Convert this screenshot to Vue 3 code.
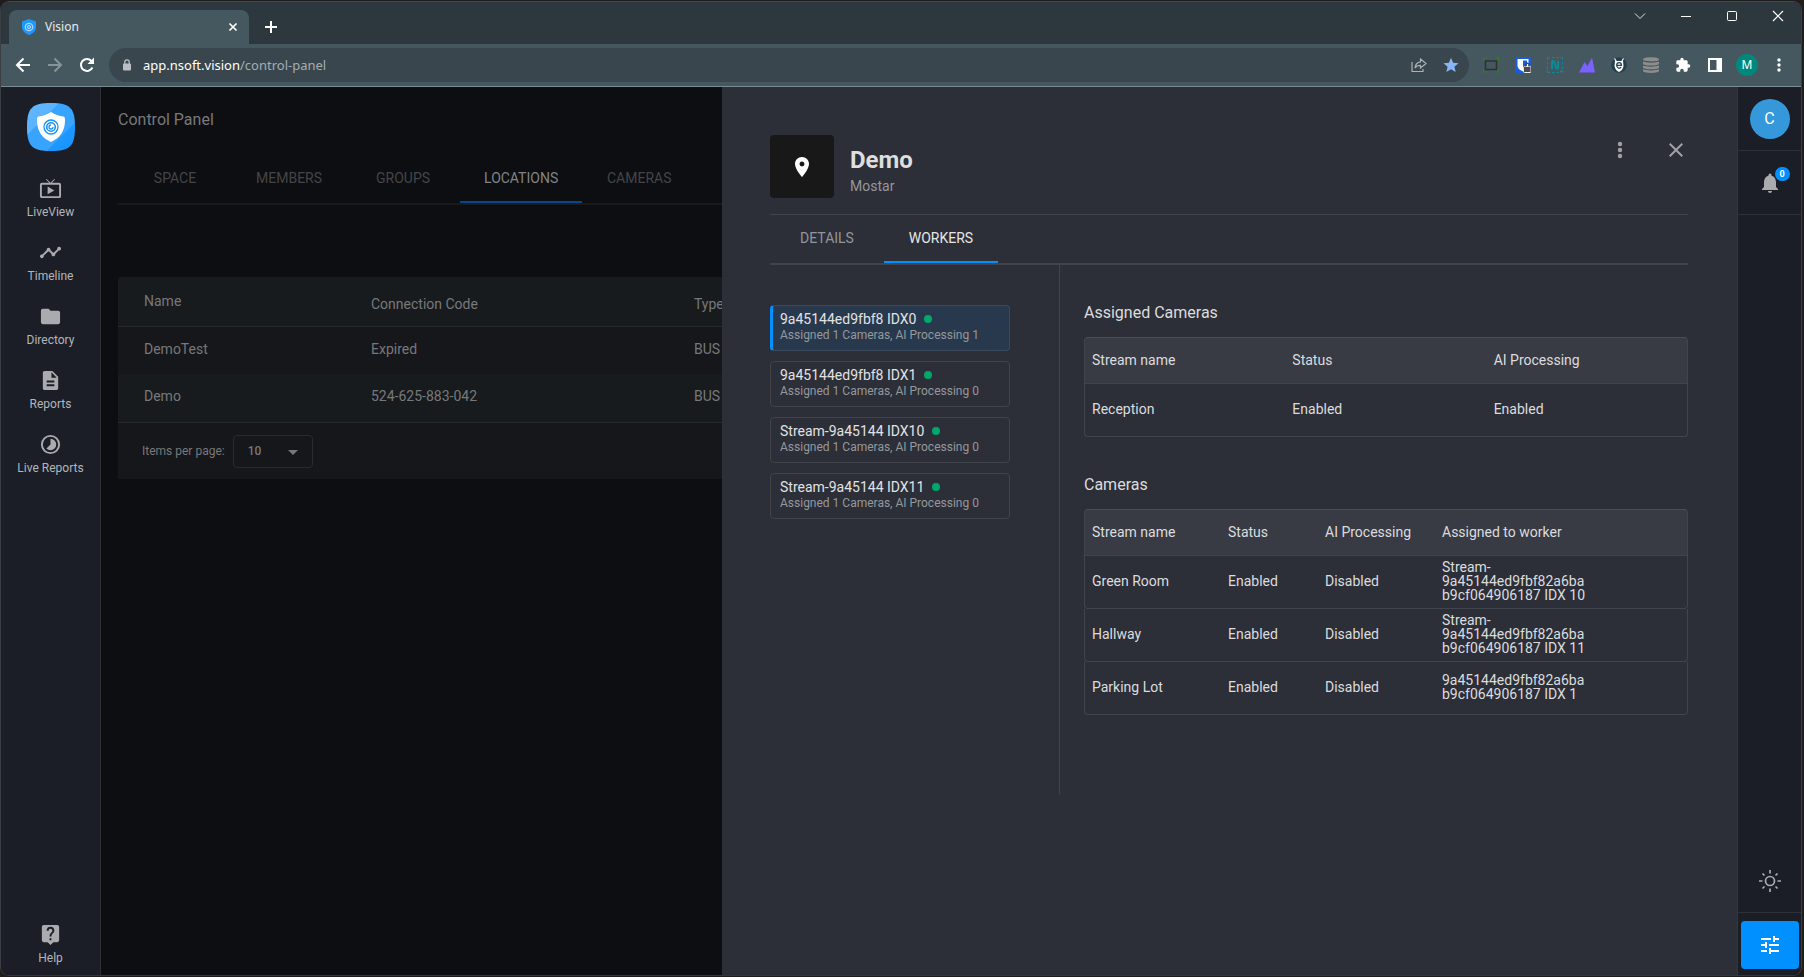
<script setup>
import { ref } from 'vue'

const navItems = [
  { label: 'LiveView', icon: 'M21 6h-7.6l3.3-3.3-.7-.7-4 4-4-4-.7.7L10.6 6H3a2 2 0 0 0-2 2v12c0 1.100.9 2 2 2h18a2 2 0 0 0 2-2V8a2 2 0 0 0-2-2zm0 14H3V8h18v12zM9 10v8l7-4z' },
  { label: 'Timeline', icon: 'M23 8c0 1.100-.9 2-2 2-.18 0-.35-.02-.51-.07l-3.560 3.550c.05.16.07.34.07.52 0 1.100-.9 2-2 2s-2-.9-2-2c0-.18.02-.36.07-.52l-2.550-2.550c-.16.05-.34.07-.52.07s-.36-.02-.52-.07l-4.550 4.560c.05.16.07.33.07.51 0 1.100-.9 2-2 2s-2-.9-2-2 .9-2 2-2c.18 0 .35.02.51.07l4.560-4.550C8.020 9.360 8 9.180 8 9c0-1.100.9-2 2-2s2 .9 2 2c0 .18-.02.36-.07.52l2.550 2.550c.16-.05.34-.07.52-.07s.36.02.52.07l3.550-3.560C19.020 8.350 19 8.180 19 8c0-1.100.9-2 2-2s2 .9 2 2z' },
  { label: 'Directory', icon: 'M10 4H4c-1.100 0-2 .9-2 2v12c0 1.100.9 2 2 2h16c1.100 0 2-.9 2-2V8c0-1.100-.9-2-2-2h-8z' },
  { label: 'Reports', icon: 'M14 2H6c-1.100 0-2 .9-2 2v16c0 1.100.9 2 2 2h12c1.100 0 2-.9 2-2V8zm2 16H8v-2h8zm0-4H8v-2h8zm-3-5V3.500L18.500 9z' },
  { label: 'Live Reports', icon: 'M16.240 7.760A5.970 5.970 0 0 0 12 6v6l-4.240 4.240a6 6 0 0 0 8.480 0 6 6 0 0 0 0-8.480zM12 2a10 10 0 1 0 0 20 10 10 0 0 0 0-20zm0 18a8 8 0 1 1 0-16 8 8 0 0 1 0 16z' }
]

const sectionTabs = ['SPACE', 'MEMBERS', 'GROUPS', 'LOCATIONS', 'CAMERAS']
const locations = [
  { name: 'DemoTest', code: 'Expired', type: 'BUS' },
  { name: 'Demo', code: '524-625-883-042', type: 'BUS' }
]
const workers = [
  { name: '9a45144ed9fbf8 IDX0', note: 'Assigned 1 Cameras, AI Processing 1' },
  { name: '9a45144ed9fbf8 IDX1', note: 'Assigned 1 Cameras, AI Processing 0' },
  { name: 'Stream-9a45144 IDX10', note: 'Assigned 1 Cameras, AI Processing 0' },
  { name: 'Stream-9a45144 IDX11', note: 'Assigned 1 Cameras, AI Processing 0' }
]
const cameras = [
  { name: 'Green Room', worker: 'Stream-9a45144ed9fbf82a6bab9cf064906187 IDX 10' },
  { name: 'Hallway', worker: 'Stream-9a45144ed9fbf82a6bab9cf064906187 IDX 11' },
  { name: 'Parking Lot', worker: '9a45144ed9fbf82a6bab9cf064906187 IDX 1' }
]

const section = ref('LOCATIONS')
const drawerTab = ref('WORKERS')
const worker = ref(0)
const address = ref('app.nsoft.vision/control-panel')
</script>

<template>
  <div class="desktop">
    <div class="window">
      <header class="titlebar">
        <div class="tab">
          <svg class="favicon" viewBox="0 0 16 16"><path fill="#1e98ff" d="M8 0l7 2.500V8c0 4-3.500 6.800-7 8-3.500-1.200-7-4-7-8V2.500z" /><circle cx="8" cy="8" r="3.700" fill="none" stroke="#a5d6ff" stroke-width="1.300" /><circle cx="8" cy="8" r="1.500" fill="none" stroke="#c8e6ff" /></svg>
          <span class="tab-title">Vision</span>
          <button class="plain" aria-label="Close tab"><svg width="10" height="10" viewBox="0 0 10 10"><path d="M1.500 1.500l7 7m0-7l-7 7" stroke="#fff" stroke-width="1.700" /></svg></button>
        </div>
        <button class="plain new-tab" aria-label="New tab"><svg width="14" height="14" viewBox="0 0 14 14"><path d="M7 1v12M1 7h12" stroke="#fff" stroke-width="2" /></svg></button>
        <div class="window-buttons">
          <button class="plain" aria-label="Search tabs"><svg width="12" height="12" viewBox="0 0 12 12" fill="none" stroke="#dfe3e5"><path d="M1 3.500l5 5 5-5" /></svg></button>
          <button class="plain" aria-label="Minimize"><svg width="12" height="12" viewBox="0 0 12 12"><path d="M1 6.500h10" stroke="#fff" /></svg></button>
          <button class="plain" aria-label="Maximize"><svg width="12" height="12" viewBox="0 0 12 12"><rect x="1.500" y="1.500" width="9" height="9" rx="1" fill="none" stroke="#fff" /></svg></button>
          <button class="plain" aria-label="Close"><svg width="12" height="12" viewBox="0 0 12 12"><path d="M1 1l10 10m0-10L1 11" stroke="#fff" stroke-width="1.200" /></svg></button>
        </div>
      </header>

      <div class="toolbar">
        <button class="plain nav-button" aria-label="Back"><svg width="16" height="16" viewBox="0 0 16 16" fill="none" stroke="#fff" stroke-width="2"><path d="M15 8H2m6.500-6.500L2 8l6.500 6.500" /></svg></button>
        <button class="plain nav-button" aria-label="Forward"><svg width="16" height="16" viewBox="0 0 16 16" fill="none" stroke="#87949a" stroke-width="2"><path d="M1 8h13M7.500 1.500L14 8l-6.500 6.500" /></svg></button>
        <button class="plain nav-button" aria-label="Reload"><svg width="16" height="16" viewBox="0 0 16 16"><path d="M13.400 10.500A6 6 0 1 1 12.500 4" fill="none" stroke="#fff" stroke-width="2" /><path d="M15 .5V7H8.500z" fill="#fff" /></svg></button>
        <div class="address">
          <svg width="10" height="12" viewBox="0 0 10 12"><rect x="1" y="4.500" width="8" height="7" rx="1" fill="#b9bfc2" /><path d="M2.800 5V3a2.200 2.200 0 0 1 4.400 0v2" fill="none" stroke="#b9bfc2" stroke-width="1.300" /></svg>
          <a class="url" :href="'https://' + address"><b>app.nsoft.vision</b>/control-panel</a>
          <button class="plain" aria-label="Share"><svg width="16" height="16" viewBox="0 0 16 16" fill="none" stroke="#aab2b6" stroke-width="1.200"><path d="M1 5v9.500h11V12M9.500 2l5.500 4.500L9.500 11V8.300C7 8.300 5.200 9 4 11c.3-3.300 2.200-5.700 5.500-6.200z" /></svg></button>
          <button class="plain" aria-label="Bookmark"><svg width="16" height="16" viewBox="0 0 16 16"><path d="M8 .8l2.100 5 5.400.5-4.100 3.500 1.300 5.300L8 12.300l-4.700 2.800 1.300-5.300L.5 6.300l5.400-.5z" fill="#8ab4f8" /></svg></button>
        </div>
        <div class="extensions">
          <svg viewBox="0 0 16 16"><path d="M.5 4V1H4M12 1h3.500v3M15.500 12v3H12M4 15H.5v-3" fill="none" stroke="#2f7d2b" stroke-width="1.200" /><rect x="2.500" y="4" width="11" height="8.500" fill="none" stroke="#303030" stroke-width="1.500" /></svg>
          <svg viewBox="0 0 16 16"><rect width="16" height="16" rx="2" fill="#175ddc" /><path d="M2.500 2h11v6.500c0 3-3 5-5.500 6-2.500-1-5.500-3-5.500-6z" fill="#fff" /><path d="M8 3.500h4v5c0 2-2.500 3.300-4 4.200z" fill="#175ddc" /><rect x="8.500" y="9.500" width="7.500" height="6" rx="1" fill="#4b4b4b" stroke="#eee" /><path d="M10.500 9.500V8a1.800 1.800 0 0 1 3.600 0v1.500" fill="none" stroke="#4b4b4b" stroke-width="1.400" /></svg>
          <svg viewBox="0 0 16 16" fill="none" stroke="#078c9c"><path d="M.5 3V.5H3M5 .5h2.500M9.500.5H12M13.500.5h2V3M15.500 5v2.500M15.500 9.500V12M.5 5v2.500M.5 9.500V12M.5 13.500v2H3M5 15.500h2.500M9.500 15.500H12M13 14.500h3M14.500 13v3" /><path d="M5 12V5.500c0-2 1.500-2 2.200-.5l1.800 5.500c.6 1.500 2.200 1.500 2.200-.5V4" stroke-width="2" /></svg>
          <svg viewBox="0 0 16 16"><path d="M0 15.500L5.500 5l3 4L13 .5l3 15z" fill="#7b61ff" /></svg>
          <svg viewBox="0 0 16 16"><circle cx="8" cy="8" r="7.800" fill="#23404f" /><path d="M5.300 4.500L3.500 1.500M10.700 4.500l1.800-3" stroke="#fff" stroke-width="1.200" /><path d="M4 4h8l.5 5c-.5 3-2 5-4.500 6-2.500-1-4-3-4.500-6z" fill="#fff" /><path d="M5.700 8.300h4.700c0-3.600-4.700-3.600-4.700 0 0 3.300 3.200 3.300 4.500 2" fill="none" stroke="#23404f" stroke-width="1.300" /></svg>
          <svg viewBox="0 0 16 16" fill="#8d8d8d"><path d="M0 2.500C0-.5 16-.5 16 2.500 16 5 0 5 0 2.500zM0 4.500c3 1.500 13 1.500 16 0V7C14 9 2 9 0 7zM0 8.500c3 1.500 13 1.500 16 0v2.300c-2 2-14 2-16 0zM0 12.300c3 1.500 13 1.500 16 0v2c-2 2.200-14 2.200-16 0z" /></svg>
          <svg viewBox="0 0 24 24" fill="#fff"><path d="M20.500 11H19V7c0-1.100-.9-2-2-2h-4V3.500a2.500 2.500 0 0 0-5 0V5H4c-1.100 0-2 .9-2 2v3.800h1.500a2.700 2.700 0 0 1 0 5.400H2V20c0 1.100.9 2 2 2h3.800v-1.500a2.700 2.700 0 0 1 5.400 0V22H17c1.100 0 2-.9 2-2v-4h1.500a2.500 2.500 0 0 0 0-5z" /></svg>
          <svg viewBox="0 0 16 16"><path d="M1 1h14v14H1zM3 3v10h6.500V3z" fill="#fff" fill-rule="evenodd" /></svg>
          <span class="profile">M</span>
          <svg viewBox="0 0 16 16" fill="#fff"><circle cx="8" cy="3" r="1.700" /><circle cx="8" cy="8" r="1.700" /><circle cx="8" cy="13" r="1.700" /></svg>
        </div>
      </div>

      <div class="app">
        <nav class="sidebar">
          <svg class="logo" viewBox="0 0 48 48">
            <defs><linearGradient id="brand" x1="0" y1="0" x2="1" y2="1"><stop offset="0" stop-color="#62b6ff" /><stop offset=".33" stop-color="#5cb3ff" /><stop offset=".34" stop-color="#38a4ff" /><stop offset=".7" stop-color="#38a4ff" /><stop offset=".71" stop-color="#1e98ff" /><stop offset="1" stop-color="#1493ff" /></linearGradient></defs>
            <path d="M24 0c19 0 24 5 24 24s-5 24-24 24S0 43 0 24 5 0 24 0z" fill="url(#brand)" />
            <path d="M24 9c4 2.500 8 4 12.500 4.500 1.500.5 1.500 2 1.500 4C38 28 33 35 24 39c-9-4-14-11-14-21.500 0-2 0-3.500 1.500-4C16 13 20 11.500 24 9z" fill="#fff" />
            <g fill="none" stroke="#1592f5"><circle cx="24" cy="24" r="7" stroke-width="1.300" /><circle cx="24" cy="24" r="4.300" stroke-width="1.600" /><path d="M24 22a2 2 0 1 0 2 2" stroke-width="1.300" /></g>
          </svg>
          <a v-for="item in navItems" :key="item.label" class="nav-item" href="#">
            <svg width="23" height="23" viewBox="0 0 24 24" fill="#a9abaf"><path :d="item.icon" fill-rule="evenodd" /></svg>
            <span>{{ item.label }}</span>
          </a>
          <a class="nav-item help" href="#">
            <svg width="23" height="23" viewBox="0 0 24 24" fill="#a9abaf"><path fill-rule="evenodd" d="M19 2H5a2 2 0 0 0-2 2v14c0 1.100.9 2 2 2h4l3 3 3-3h4c1.100 0 2-.9 2-2V4a2 2 0 0 0-2-2zm-6 16h-2v-2h2zm2.070-7.750l-.9.920C13.450 11.900 13 12.500 13 14h-2v-.5c0-1.100.45-2.100 1.170-2.830l1.240-1.260c.37-.36.59-.86.59-1.410a2 2 0 0 0-4 0H8a4 4 0 0 1 8 0c0 .88-.36 1.680-.93 2.250z" /></svg>
            <span>Help</span>
          </a>
        </nav>

        <main class="main">
          <h1>Control Panel</h1>
          <div class="tabs dim" role="tablist">
            <button v-for="name in sectionTabs" :key="name" role="tab" :class="{ active: name === section }" @click="section = name">{{ name }}</button>
          </div>
          <table class="locations">
            <thead>
              <tr><th class="name">Name</th><th class="code">Connection Code</th><th>Type</th></tr>
            </thead>
            <tbody>
              <tr v-for="row in locations" :key="row.name"><td>{{ row.name }}</td><td>{{ row.code }}</td><td>{{ row.type }}</td></tr>
            </tbody>
          </table>
          <div class="pager">
            <label for="page-size">Items per page:</label>
            <div class="select">
              <select id="page-size"><option>10</option><option>20</option></select>
              <svg width="10" height="5" viewBox="0 0 10 5"><path d="M0 0h10L5 5z" fill="#77787a" /></svg>
            </div>
          </div>
        </main>

        <section class="drawer">
          <header class="drawer-head">
            <div class="pin"><svg width="24" height="24" viewBox="0 0 24 24"><path fill="#fff" d="M12 2C8.130 2 5 5.130 5 9c0 5.250 7 13 7 13s7-7.750 7-13c0-3.870-3.130-7-7-7zm0 9.500a2.500 2.500 0 0 1 0-5 2.500 2.500 0 0 1 0 5z" /></svg></div>
            <div class="place"><h2>Demo</h2><p>Mostar</p></div>
            <div class="drawer-actions">
              <button class="plain" aria-label="More"><svg width="24" height="24" viewBox="0 0 24 24" fill="#a0a1a5"><circle cx="12" cy="6" r="2.200" /><circle cx="12" cy="12" r="2.200" /><circle cx="12" cy="18" r="2.200" /></svg></button>
              <button class="plain" aria-label="Close panel"><svg width="24" height="24" viewBox="0 0 24 24"><path fill="#a0a1a5" d="M19 6.410L17.590 5 12 10.590 6.410 5 5 6.410 10.590 12 5 17.590 6.410 19 12 13.410 17.590 19 19 17.590 13.410 12z" /></svg></button>
            </div>
          </header>
          <div class="tabs" role="tablist">
            <button v-for="name in ['DETAILS', 'WORKERS']" :key="name" role="tab" :class="{ active: name === drawerTab }" @click="drawerTab = name">{{ name }}</button>
          </div>
          <div class="drawer-body">
            <div class="workers">
              <button v-for="(item, i) in workers" :key="item.name" class="worker" :class="{ selected: i === worker }" @click="worker = i">
                <span class="worker-name">{{ item.name }}<i class="dot"></i></span>
                <span class="worker-note">{{ item.note }}</span>
              </button>
            </div>
            <div class="details">
              <h3>Assigned Cameras</h3>
              <table class="grid">
                <thead><tr><th>Stream name</th><th>Status</th><th>AI Processing</th></tr></thead>
                <tbody><tr><td>Reception</td><td>Enabled</td><td>Enabled</td></tr></tbody>
              </table>
              <h3>Cameras</h3>
              <table class="grid">
                <thead><tr><th class="c-name">Stream name</th><th class="c-status">Status</th><th class="c-ai">AI Processing</th><th>Assigned to worker</th></tr></thead>
                <tbody>
                  <tr v-for="cam in cameras" :key="cam.name"><td>{{ cam.name }}</td><td>Enabled</td><td>Disabled</td><td><div class="assigned">{{ cam.worker }}</div></td></tr>
                </tbody>
              </table>
            </div>
          </div>
        </section>

        <aside class="rail">
          <div class="rail-cell"><button class="avatar">C</button></div>
          <div class="rail-cell">
            <button class="plain bell" aria-label="Notifications">
              <svg width="24" height="24" viewBox="0 0 24 24" fill="#a9abaf"><path d="M12 22c1.100 0 2-.9 2-2h-4c0 1.100.9 2 2 2zm6-6v-5c0-3.070-1.630-5.640-4.500-6.320V4a1.500 1.500 0 0 0-3 0v.68C7.640 5.360 6 7.920 6 11v5l-2 2v1h16v-1z" /></svg>
              <span class="badge">0</span>
            </button>
          </div>
          <button class="plain theme" aria-label="Theme"><svg width="24" height="24" viewBox="0 0 24 24" fill="none" stroke="#a9abaf" stroke-width="1.700"><circle cx="12" cy="12" r="4.500" /><path d="M12 1v3.500M12 19.500V23M1 12h3.500M19.500 12H23M4.500 4.500l2 2M17.500 17.500l2 2M4.500 19.500l2-2M17.500 6.500l2-2" /></svg></button>
          <div class="rail-foot">
            <button class="settings" aria-label="Settings"><svg width="24" height="24" viewBox="0 0 24 24" fill="#fff"><path d="M3 17v2h6v-2zM3 5v2h10V5zm10 16v-2h8v-2h-8v-2h-2v6zM7 9v2H3v2h4v2h2V9zm14 4v-2H11v2zm-6-4h2V7h4V5h-4V3h-2z" /></svg></button>
          </div>
        </aside>
      </div>
    </div>
  </div>
</template>

<style>
html, body, #app { height: 100%; }
body { margin: 0; overflow: hidden; background: #1f1d1c; }
</style>

<style scoped>
* { box-sizing: border-box; }
.desktop { height: 100%; padding: 1px 2px 1px 0; background: #1f1d1c; font: 14px/16px Roboto, "Liberation Sans", sans-serif; color: #dcdcde; }
.window { height: 100%; display: flex; flex-direction: column; overflow: hidden; border: 1px solid #3b3f43; border-top-color: #41474b; border-bottom-color: #35363a; border-radius: 9px; background: #1b1e26; }
.plain { display: flex; align-items: center; justify-content: center; padding: 0; border: 0; background: none; }
svg { display: block; flex: none; }
h1, h2, h3, p { margin: 0; font-weight: 400; }

.titlebar { flex: none; height: 42px; display: flex; align-items: flex-end; padding-left: 8px; background: #2d383e; }
.tab { display: flex; align-items: center; width: 240px; height: 34px; padding: 0 11px 0 12px; border-radius: 8px 8px 0 0; background: #455860; }
.favicon { width: 16px; height: 16px; }
.tab-title { flex: 1; margin-left: 8px; font: 12px/16px "Noto Sans", sans-serif; color: #e8ebec; }
.new-tab { width: 44px; height: 34px; }
.window-buttons { display: flex; align-self: flex-start; margin-left: auto; }
.window-buttons button { width: 46px; height: 28px; }

.toolbar { flex: none; height: 43px; display: flex; align-items: center; border-bottom: 1px solid #7a8b92; padding: 0 14px 0 6px; background: #455860; }
.nav-button { width: 32px; height: 32px; }
.address { flex: 1; display: flex; align-items: center; gap: 16px; height: 34px; margin-left: 6px; padding: 0 10px 0 13px; border-radius: 17px; background: #39464d; }
.url { flex: 1; margin-left: -5px; font: 13px/18px "Noto Sans", sans-serif; color: #a5adb1; text-decoration: none; }
.url b { font-weight: 400; color: #fff; }
.extensions { display: flex; align-items: center; gap: 16px; margin-left: 14px; }
.extensions svg { width: 16px; height: 16px; }
.profile { width: 22px; height: 22px; margin: 0 -3px; border-radius: 50%; background: #00897b; font: 12px/22px "Noto Sans", sans-serif; text-align: center; color: #fff; }

.app { flex: 1; min-height: 0; display: grid; grid-template-columns: 100px minmax(0, 621fr) minmax(0, 1015fr) 64px; grid-template-rows: minmax(0, 1fr); }
.sidebar { display: flex; flex-direction: column; align-items: center; padding-top: 16px; border-right: 1px solid #303136; background: #1b1e26; }
.logo { width: 48px; height: 48px; margin-bottom: 17px; }
.nav-item { height: 64px; display: flex; flex-direction: column; align-items: center; gap: 4px; padding-top: 9px; font-size: 12px; color: #b4b5b8; text-decoration: none; }
.help { margin-top: auto; height: 61px; }

.main { overflow: hidden; padding: 25px 0 0 17px; background: #0d0e11; color: #77787a; }
.main h1 { font-size: 16px; line-height: 16px; margin-bottom: 25px; }
.tabs { display: flex; border-bottom: 2px solid #41444c; }
.tabs button { min-width: 114px; height: 48px; padding: 0 24px; border: 0; border-bottom: 2px solid transparent; background: none; font: 14px/16px Roboto, sans-serif; color: #93959a; }
.tabs .active { border-bottom-color: #0090ff; color: #e6e6e7; }
.dim { border-bottom-color: #191a1d; }
.dim button { height: 50px; flex: none; padding-top: 2px; color: #444548; }
.dim .active { border-bottom-color: #00498a; color: #828385; }
.locations { width: 900px; margin-top: 72px; border-collapse: separate; border-spacing: 0; border-radius: 4px 0 0 0; background: #181b1e; text-align: left; }
.locations th, .locations td { padding: 0 0 0 26px; font-weight: 400; }
.locations th { height: 50px; padding-top: 4px; border-bottom: 1px solid #27292b; }
.locations .name { width: 227px; padding: 0 0 2px 26px; }
.locations .code { width: 323px; }
.locations td { height: 48px; padding-bottom: 4px; }
.locations tbody tr:first-child { background: #16171a; }
.locations tbody tr:first-child td { height: 47px; }
.pager { display: flex; align-items: center; gap: 8px; height: 57px; padding-left: 24px; border-top: 1px solid #27292b; background: #16171a; font-size: 12px; }
.select { position: relative; width: 80px; }
.select select { width: 100%; height: 33px; padding: 0 14px; appearance: none; border: 1px solid #2a2b2e; border-radius: 4px; background: none; font: 500 12px/16px Roboto, sans-serif; color: #77787a; }
.select svg { position: absolute; right: 15px; top: 15px; pointer-events: none; }

.drawer { padding: 48px 49px 0 48px; background: #2c2f38; }
.drawer-head { display: flex; padding-bottom: 16px; border-bottom: 1px solid #41444c; }
.pin { display: flex; align-items: center; justify-content: center; width: 64px; height: 63px; border-radius: 4px; background: #181818; }
.place { margin-left: 16px; padding-top: 11px; }
.place h2 { font-size: 24px; line-height: 28px; font-weight: 700; color: #dededf; }
.place p { margin-top: 4px; color: #96979b; }
.drawer-actions { display: flex; gap: 32px; height: 30px; margin-left: auto; }
.drawer-body { display: flex; height: 529px; }
.workers { flex: none; width: 290px; display: flex; flex-direction: column; gap: 10px; padding: 40px 49px 0 0; border-right: 1px solid #41444c; }
.worker { display: flex; flex-direction: column; gap: 1px; height: 46px; padding: 5px 9px 0; border: 1px solid #41444c; border-radius: 4px; background: none; font: 14px/16px Roboto, sans-serif; text-align: left; color: #e2e2e4; }
.selected { padding-left: 7px; border-left: 3px solid #0090ff; border-color: #3a4a5c #3a4a5c #3a4a5c #0090ff; background: #28394e; }
.worker-name { display: flex; align-items: center; height: 16px; }
.dot { width: 8px; height: 8px; margin-left: 8px; border-radius: 50%; background: #00a86b; }
.worker-note { font-size: 12px; line-height: 14px; color: #96979b; }
.details { flex: 1; min-width: 0; padding: 40px 0 0 24px; }
.details h3 { font-size: 16px; line-height: 16px; margin-bottom: 16px; }
.grid { width: 100%; table-layout: fixed; border-collapse: separate; border-spacing: 0; margin-bottom: 40px; text-align: left; }
.grid th, .grid td { padding: 0 0 0 7px; border-bottom: 1px solid #41444c; font-weight: 400; line-height: 14px; }
.grid th { height: 47px; padding-bottom: 2px; border-top: 1px solid #4a4d55; background: #383b44; }
.grid td { height: 53px; padding-bottom: 3px; }
.grid tr > :first-child { border-left: 1px solid #41444c; }
.grid tr > :last-child { border-right: 1px solid #41444c; }
.grid th:first-child { border-top-left-radius: 4px; }
.grid th:last-child { border-top-right-radius: 4px; }
.grid td:first-child { border-bottom-left-radius: 4px; }
.grid td:last-child { border-bottom-right-radius: 4px; }
.c-name { width: 137px; }
.c-status { width: 97px; }
.c-ai { width: 117px; }
.assigned { width: 150px; overflow-wrap: break-word; }

.rail { display: flex; flex-direction: column; border-left: 1px solid #35363a; background: #1b1e26; }
.rail-cell { display: flex; align-items: center; justify-content: center; height: 64px; border-bottom: 1px solid #303136; }
.avatar { width: 40px; height: 40px; padding: 0; border: 0; border-radius: 50%; background: #3498db; font: 16px/40px Roboto, sans-serif; color: #fff; }
.bell { position: relative; }
.badge { position: absolute; left: 17px; top: -4px; width: 15px; height: 14px; border-radius: 7px; background: #0090ff; font: 700 9px/14px Roboto, sans-serif; text-align: center; color: #fff; }
.theme { height: 62px; margin-top: auto; }
.rail-foot { height: 63px; padding: 8px 2px 0 3px; border-top: 1px solid #303136; }
.settings { display: flex; align-items: center; justify-content: center; width: 100%; height: 48px; padding: 0; border: 0; border-radius: 4px; background: #0090ff; }
</style>
